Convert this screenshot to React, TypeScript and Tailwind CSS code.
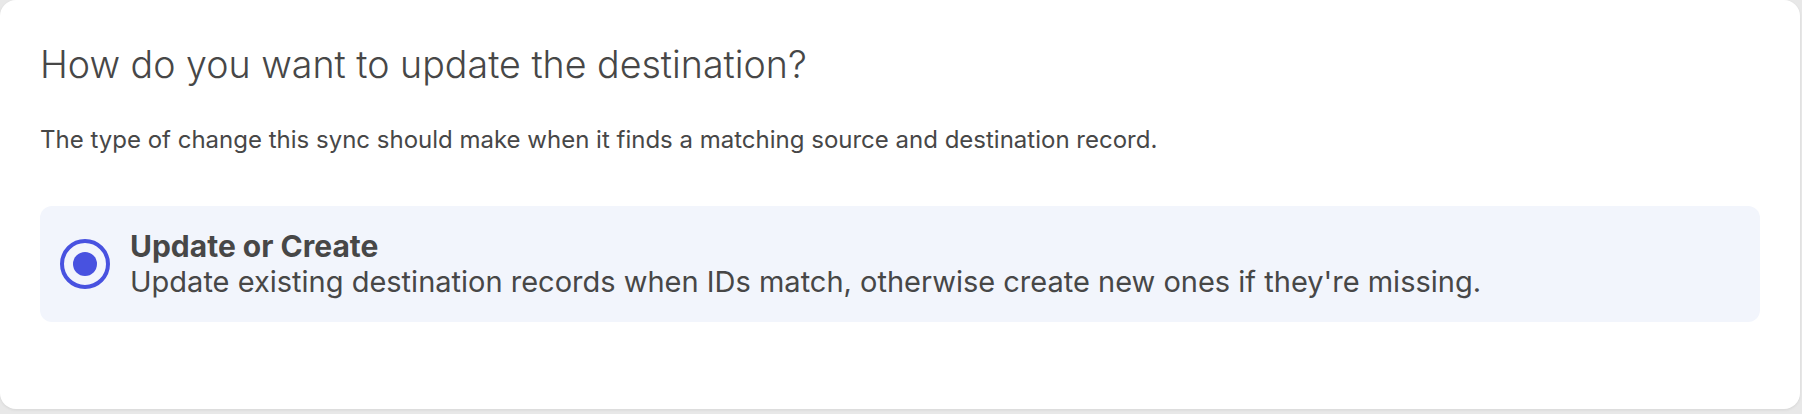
import { FC } from "react";

const RadioDot: FC = () => (
  <span className="flex h-[50px] w-[50px] shrink-0 items-center justify-center rounded-full border-4 border-[#4852e0]">
    <span className="h-[24px] w-[24px] rounded-full bg-[#4852e0]" />
  </span>
);

const App: FC = () => {
  return (
    <div className="h-[414px] w-[1802px] bg-[#e8e8e8] font-['Inter',sans-serif] text-[#474747]">
      <div className="h-[409px] w-[1800px] rounded-2xl bg-white px-10 pt-[42px] shadow-[0_1px_3px_rgba(0,0,0,0.08)]">
        {/* heading */}
        <h1 className="text-[37.6px] leading-[1.21] font-light">
          How do you want to update the destination?
        </h1>
        <p className="mt-[38px] text-[24px] leading-[1.21]">
          The type of change this sync should make when it finds a matching
          source and destination record.
        </p>

        {/* option */}
        <div className="mt-[51px] flex h-[116px] items-center gap-5 rounded-xl bg-[#f2f5fc] px-5">
          <RadioDot />
          <div className="flex flex-col">
            <span className="text-[30px] leading-[1.21] font-bold">
              Update or Create
            </span>
            <span className="text-[29px] leading-[1.18]">
              Update existing destination records when IDs match, otherwise
              create new ones if they're missing.
            </span>
          </div>
        </div>
      </div>
    </div>
  );
};

export default App;
